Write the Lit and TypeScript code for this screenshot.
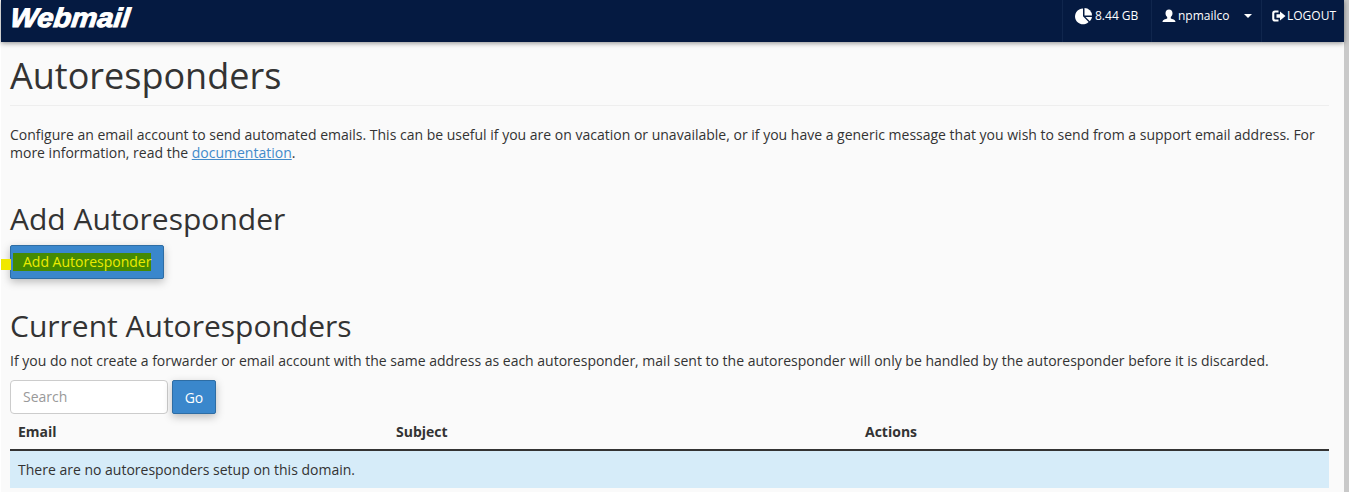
import { LitElement, html, css } from "lit";
import { customElement } from "lit/decorators.js";

@customElement("app-root")
export class AppRoot extends LitElement {
  static styles = css`
    :host { display: flex; width: 1349px; height: 492px; overflow: hidden; background: #fafafa; font-family: "Open Sans", sans-serif; font-size: 14px; color: #333; position: relative; }
    * { box-sizing: border-box; }
    .edge { width: 1px; background: #fff; flex: none; }
    .main { width: 1343px; flex: none; display: flex; flex-direction: column; }
    .strip { width: 5px; flex: none; background: #c9c9c9; }
    .nav { height: 42px; background: #051a41; box-shadow: 0 1px 5px rgba(0,0,0,.45); display: flex; justify-content: space-between; color: #fff; font-size: 12px; position: relative; }
    .logo { font-family: "Liberation Sans", sans-serif; font-weight: 700; font-style: italic; font-size: 27px; margin: 3px 0 0 9px; line-height: 30px; transform: scaleX(1.08) skewX(-6deg); transform-origin: left; -webkit-text-stroke: 1px #fff; }
    .items { display: flex; margin-right: 1px; }
    .item { display: flex; align-items: flex-start; padding-top: 7px; border-left: 1px solid #10264d; height: 42px; line-height: 18px; }
    .usage { width: 89px; padding-left: 12px; gap: 2px; }
    .user { width: 110px; padding-left: 10px; gap: 2px; }
    .caret { width: 0; height: 0; border: 4px solid transparent; border-top-color: #fff; border-bottom: 0; margin: 7px 0 0 12px; }
    .logout { width: 82px; padding-left: 10px; gap: 1px; }
    .content { padding: 0 15px 0 9px; }
    h1 { font-weight: 400; font-size: 36px; line-height: 50px; margin: 9px 0 0; padding-bottom: 4px; border-bottom: 1px solid #eee; color: #333; }
    p { margin: 0; line-height: 18px; }
    .intro { margin-top: 20px; }
    a { color: #428bca; text-decoration: underline; }
    h2 { font-weight: 400; font-size: 30px; line-height: 38px; margin: 0; color: #333; }
    .h-add { margin-top: 38px; }
    .btn { background: #3a87cc; border: 1px solid #2e6da4; border-radius: 2px; color: #fff; font: inherit; height: 34px; box-shadow: 0 3px 8px rgba(0,0,0,.25); padding: 0; display: block; }
    .add { width: 154px; margin-top: 7px; position: relative; text-align: left; padding-left: 12px; }
    .mark { display: inline-block; background: #458a00; color: #ecec00; line-height: 18px; padding: 0 0 0 10px; margin-left: -10px; position: relative; top: -1px; }
    .yellow { position: absolute; left: 1px; top: 259px; width: 10px; height: 11px; background: #f0e800; }
    .h-cur { margin-top: 28px; }
    .desc { margin-top: 7px; }
    .search { display: flex; gap: 4px; margin-top: 10px; }
    .input { width: 158px; height: 34px; background: #fff; border: 1px solid #ccc; border-radius: 4px; padding: 0 12px; line-height: 32px; color: #999; }
    .go { width: 44px; }
    .thead { display: grid; grid-template-columns: 378px 469px 1fr; height: 37px; border-bottom: 2px solid #333; padding: 8px 8px 0; font-weight: 700; line-height: 20px; }
    .empty { height: 37px; background: #d6ecf9; padding: 0 8px; line-height: 38px; width: 100%; }
  `;

  render() {
    return html`
      <div class="edge"></div>
      <div class="main">
        <div class="nav">
          <div class="logo">Webmail</div>
          <div class="items">
            <div class="item usage">
              <svg width="18" height="18" viewBox="0 0 18 18" fill="#fff"><path d="M8 1.500v7.800l5.600 5.600A7.900 7.900 0 1 1 8 1.500z"/><path d="M9.500 1a7.500 7.500 0 0 1 7.500 7.500H9.500z"/><path d="M10.500 10H17a7.500 7.500 0 0 1-2.200 4.300z"/></svg>
              <span>8.44 GB</span>
            </div>
            <div class="item user">
              <svg width="14" height="18" viewBox="0 0 14 18" fill="#fff"><path d="M7 2.500c2.200 0 3.500 1.600 3.500 3.700 0 1.600-.8 3-1.700 3.800v1.500c1.500.6 4.700 1.200 4.700 3.500H.5c0-2.300 3.200-2.900 4.700-3.500V10C4.300 9.200 3.500 7.800 3.500 6.200 3.500 4.100 4.800 2.500 7 2.500z"/></svg>
              <span>npmailco</span><i class="caret"></i>
            </div>
            <div class="item logout">
              <svg width="14" height="18" viewBox="0 0 14 18" fill="#fff"><path d="M6.500 3.500H3A2.800 2.800 0 0 0 .2 6.300v5.400A2.800 2.800 0 0 0 3 14.500h3.500v-2H3.300a1 1 0 0 1-1-1v-5a1 1 0 0 1 1-1h3.200z"/><path d="M4.500 7.300H8V4.500L13.500 9 8 13.500v-2.800H4.500z"/></svg>
              <span>LOGOUT</span>
            </div>
          </div>
        </div>
        <div class="content">
          <h1>Autoresponders</h1>
          <p class="intro">Configure an email account to send automated emails. This can be useful if you are on vacation or unavailable, or if you have a generic message that you wish to send from a support email address. For more information, read the <a href="#">documentation</a>.</p>
          <h2 class="h-add">Add Autoresponder</h2>
          <button class="btn add"><span class="mark">Add Autoresponder</span></button>
          <h2 class="h-cur">Current Autoresponders</h2>
          <p class="desc">If you do not create a forwarder or email account with the same address as each autoresponder, mail sent to the autoresponder will only be handled by the autoresponder before it is discarded.</p>
          <div class="search">
            <div class="input">Search</div>
            <button class="btn go">Go</button>
          </div>
          <div class="thead"><span>Email</span><span>Subject</span><span>Actions</span></div>
          <div class="empty">There are no autoresponders setup on this domain.</div>
        </div>
      </div>
      <div class="strip"></div>
      <div class="yellow"></div>
    `;
  }
}
